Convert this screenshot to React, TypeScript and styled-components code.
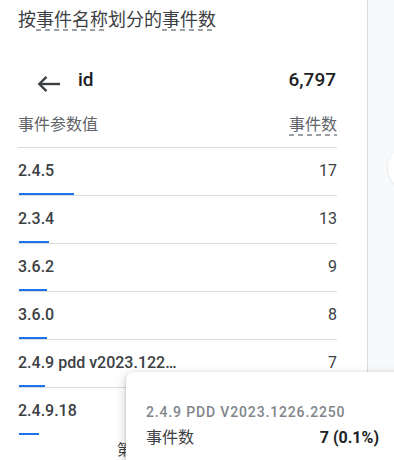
import React from "react";
import styled, { createGlobalStyle } from "styled-components";

const Global = createGlobalStyle`
  html, body { margin: 0; padding: 0; }
  body {
    font-family: Roboto, "Noto Sans CJK SC", "Noto Sans", sans-serif;
    background: #f8f9fa;
    overflow: hidden;
  }
`;

const Page = styled.div`
  position: relative;
  display: flex;
  width: 394px;
  height: 460px;
  overflow: hidden;
  background: #f8f9fa;
`;

const Card = styled.section`
  width: 368px;
  flex: none;
  box-sizing: border-box;
  background: #ffffff;
  border-right: 1px solid #dadce0;
  padding: 8px 30px 0 18px;
  display: flex;
  flex-direction: column;
`;

const Title = styled.h2`
  margin: 0;
  font-size: 18px;
  line-height: 24px;
  font-weight: 400;
  color: #3c4043;
  white-space: nowrap;
`;

const Dashed = styled.span`
  padding-bottom: 1px;
  background-image: linear-gradient(to right, #9aa0a6 60%, transparent 60%);
  background-size: 9px 2px;
  background-repeat: repeat-x;
  background-position: left bottom;
`;

const SummaryRow = styled.div`
  display: flex;
  align-items: center;
  height: 48px;
  margin-top: 24px;
`;

const BackButton = styled.span`
  display: flex;
  margin-left: 19px;
  margin-top: 8px;
  color: #3c4043;
`;

const Dimension = styled.span`
  margin-left: 17px;
  font-size: 19px;
  font-weight: 500;
  color: #202124;
  flex: 1;
`;

const Total = styled.span`
  font-size: 19px;
  font-weight: 500;
  color: #202124;
  margin-right: 1px;
`;

const HeaderRow = styled.div`
  display: flex;
  justify-content: space-between;
  align-items: flex-start;
  margin-top: 11px;
  height: 33px;
  border-bottom: 1px solid #dadce0;
  font-size: 16px;
  line-height: 20px;
  color: #5f6368;
`;

const HeaderMetric = styled(Dashed)`
  padding-bottom: 1px;
`;

const Row = styled.div<{ $last?: boolean }>`
  display: flex;
  flex-direction: column;
  height: 48px;
  box-sizing: border-box;
  border-bottom: ${(p) => (p.$last ? "none" : "1px solid #dadce0")};
`;

const RowContent = styled.div`
  display: flex;
  align-items: center;
  justify-content: space-between;
  height: 45px;
  font-size: 16px;
  color: #3c4043;
`;

const RowLabel = styled.span`
  font-weight: 500;
  max-width: 163px;
  white-space: nowrap;
  overflow: hidden;
  text-overflow: ellipsis;
`;

const RowValue = styled.span`
  font-weight: 400;
`;

const Bar = styled.div`
  height: 2px;
  margin-left: 1px;
  background: #1a73e8;
`;

const Pager = styled.div`
  display: flex;
  margin-top: 4px;
  padding-left: 99px;
  font-size: 15px;
  line-height: 20px;
  color: #3c4043;
  white-space: nowrap;
`;

const Tooltip = styled.div`
  position: absolute;
  left: 126px;
  top: 372px;
  width: 273px;
  height: 110px;
  box-sizing: border-box;
  padding: 30px 20px 0 20px;
  background: #ffffff;
  border-radius: 8px 0 0 0;
  box-shadow: 0 1px 3px rgba(60, 64, 67, 0.3), 0 4px 8px 3px rgba(60, 64, 67, 0.15);
`;

const TipLabel = styled.div`
  font-size: 14px;
  line-height: 20px;
  font-weight: 500;
  letter-spacing: 0.85px;
  text-transform: uppercase;
  color: #80868b;
  white-space: nowrap;
`;

const TipRow = styled.div`
  display: flex;
  justify-content: space-between;
  align-items: center;
  margin-top: 4px;
  font-size: 16px;
  line-height: 24px;
  color: #3c4043;
`;

const TipValue = styled.span`
  font-weight: 700;
  color: #202124;
`;

const Fab = styled.div`
  position: absolute;
  left: 388px;
  top: 146px;
  width: 44px;
  height: 44px;
  border-radius: 50%;
  background: #ffffff;
  box-shadow: 0 1px 3px rgba(60, 64, 67, 0.12);
`;

const rows = [
  { label: "2.4.5", value: "17", bar: 55 },
  { label: "2.3.4", value: "13", bar: 30 },
  { label: "3.6.2", value: "9", bar: 28 },
  { label: "3.6.0", value: "8", bar: 28 },
  { label: "2.4.9 pdd v2023.1226.2250", value: "7", bar: 26 },
  { label: "2.4.9.18", value: "7", bar: 20 },
];

const ArrowBack = () => (
  <svg width="24" height="18" viewBox="0 0 24 18" fill="none">
    <path d="M23 9H2.5" stroke="currentColor" strokeWidth="2.4" />
    <path d="M9.5 1.8L2.3 9l7.2 7.2" stroke="currentColor" strokeWidth="2.4" />
  </svg>
);

export default function App() {
  return (
    <>
      <Global />
      <Page>
        <Card>
          <Title>
            按<Dashed>事件名称</Dashed>划分的<Dashed>事件数</Dashed>
          </Title>
          <SummaryRow>
            <BackButton>
              <ArrowBack />
            </BackButton>
            <Dimension>id</Dimension>
            <Total>6,797</Total>
          </SummaryRow>
          <HeaderRow>
            <span>事件参数值</span>
            <HeaderMetric>事件数</HeaderMetric>
          </HeaderRow>
          {rows.map((r, i) => (
            <Row key={r.label} $last={i === rows.length - 1}>
              <RowContent>
                <RowLabel>{r.label}</RowLabel>
                <RowValue>{r.value}</RowValue>
              </RowContent>
              <Bar style={{ width: r.bar }} />
            </Row>
          ))}
          <Pager>第 1-6 行，共 40 行</Pager>
        </Card>
        <Fab />
        <Tooltip>
          <TipLabel>2.4.9 pdd v2023.1226.2250</TipLabel>
          <TipRow>
            <span>事件数</span>
            <TipValue>7 (0.1%)</TipValue>
          </TipRow>
        </Tooltip>
      </Page>
    </>
  );
}
